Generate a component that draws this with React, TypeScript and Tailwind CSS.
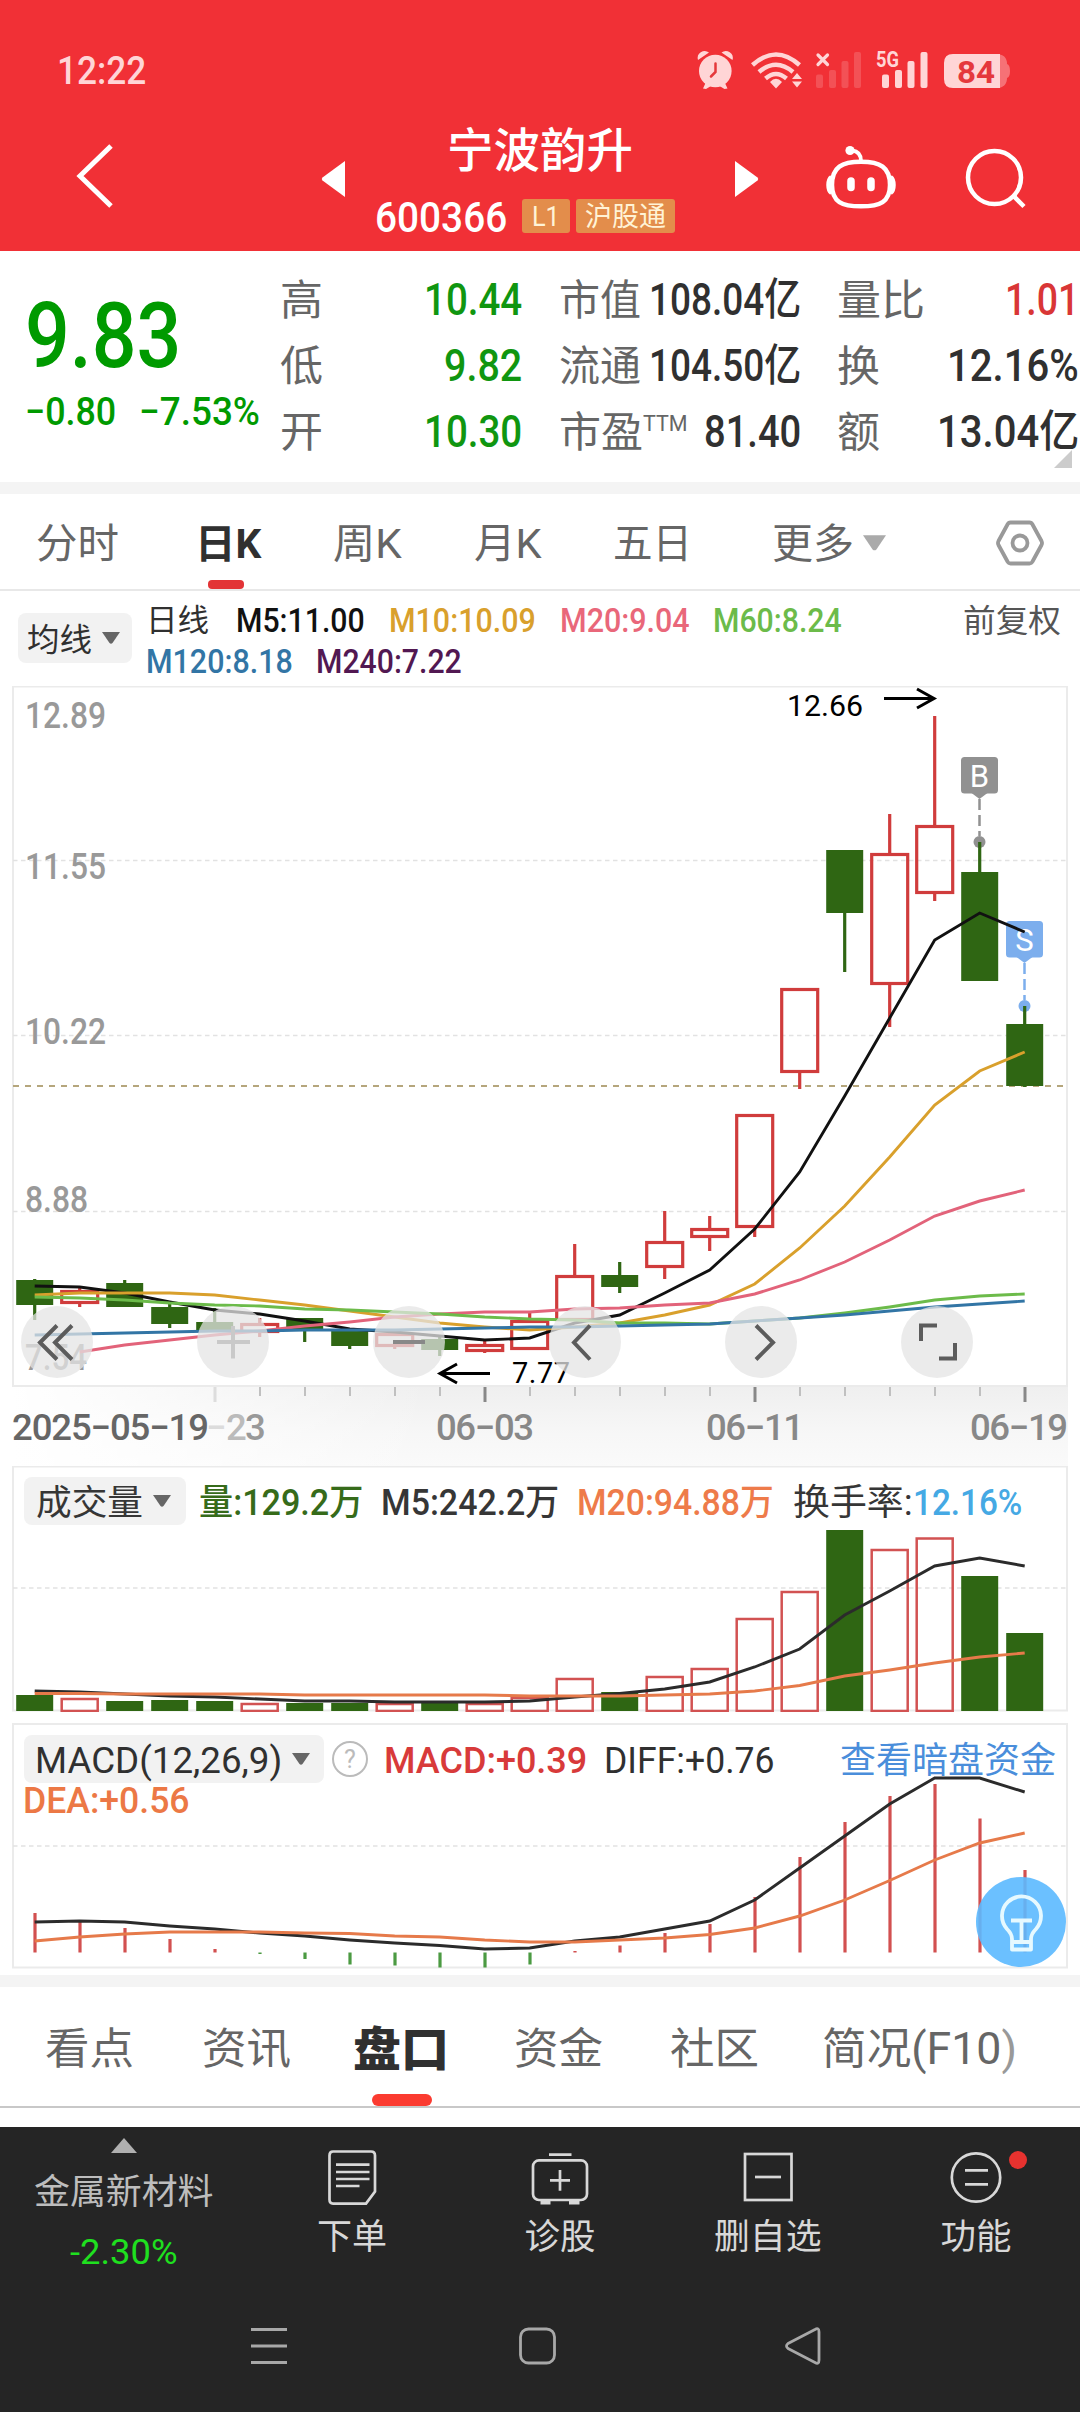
import { useLayoutEffect, useRef, useState, type ReactNode } from "react";

/** Single line of text squeezed horizontally to a fixed width, like a condensed DIN face. */
function Fit({ w, className = "", children }: { w: number; className?: string; children: ReactNode }) {
  const ref = useRef<HTMLSpanElement>(null);
  const [scale, setScale] = useState(1);
  useLayoutEffect(() => {
    if (ref.current) setScale(w / ref.current.offsetWidth);
  }, [w]);
  return (
    <span className={`inline-block shrink-0 translate-y-[2px] leading-none ${className}`} style={{ width: w }}>
      <span ref={ref} className="inline-block origin-left whitespace-nowrap" style={{ transform: `scaleX(${scale})` }}>{children}</span>
    </span>
  );
}

const GREEN = "#2f6613";
const RED = "#d03c3c";
const STEP = 45;
const cx = (i: number) => 34.7 + STEP * i;

// [up, high, body top, body bottom, low] in page pixels
const candles: [boolean, number, number, number, number][] = [
  [false, 1279, 1280, 1305, 1320],
  [true, 1288, 1290, 1304, 1307],
  [false, 1280, 1283, 1307, 1307],
  [false, 1304, 1307, 1324, 1328],
  [false, 1308, 1322, 1332, 1332],
  [true, 1318, 1323, 1333, 1337],
  [false, 1318, 1318, 1330, 1342],
  [false, 1331, 1331, 1346, 1349],
  [true, 1333, 1333, 1347, 1349],
  [false, 1337, 1339, 1350, 1356],
  [true, 1341, 1344, 1352, 1353],
  [true, 1313, 1320, 1350, 1350],
  [true, 1244, 1275, 1321, 1321],
  [false, 1262, 1275, 1287, 1293],
  [true, 1211, 1241, 1268, 1279],
  [true, 1216, 1228, 1238, 1251],
  [true, 1114, 1114, 1228, 1237],
  [true, 988, 988, 1073, 1089],
  [false, 850, 850, 913, 972],
  [true, 814, 853, 985, 1027],
  [true, 716, 825, 894, 901],
  [false, 842, 872, 981, 981],
  [false, 1006, 1024, 1086, 1087],
];

const ma5 = [1286, 1287, 1293, 1302, 1310, 1314, 1321, 1329, 1332, 1336, 1340, 1338, 1323, 1315, 1293, 1270, 1229, 1172, 1096, 1018, 940, 913, 932];
const ma10 = [1295, 1293, 1293, 1293, 1295, 1300, 1305, 1311, 1317, 1323, 1327, 1330, 1327, 1323, 1315, 1305, 1284, 1248, 1206, 1157, 1105, 1071, 1052];
const ma20 = [1352, 1345, 1340, 1335, 1331, 1326, 1322, 1317, 1314, 1312, 1312, 1309, 1308, 1305, 1303, 1294, 1280, 1262, 1240, 1216, 1201, 1190];
const ma60 = [1297, 1298, 1300, 1303, 1305, 1306, 1309, 1310, 1312, 1314, 1317, 1319, 1320, 1323, 1323, 1324, 1321, 1318, 1313, 1307, 1300, 1296, 1294];
const ma120 = [1335, 1334, 1333, 1332, 1331, 1331, 1330, 1330, 1330, 1329, 1328, 1327, 1327, 1326, 1325, 1324, 1321, 1318, 1315, 1311, 1307, 1304, 1301];

const volTop = [1695, 1698, 1701, 1700, 1701, 1703, 1703, 1703, 1703, 1703, 1703, 1697, 1678, 1692, 1676, 1668, 1618, 1591, 1530, 1549, 1537.5, 1576, 1633];
const vol5 = [1691, 1692, 1694, 1696, 1697, 1699, 1701, 1701, 1702, 1702, 1702, 1701, 1697, 1693.5, 1689, 1682, 1667, 1649, 1615, 1591, 1566, 1558, 1566];
const vol20 = [1693.5, 1693.5, 1694, 1694, 1694, 1694, 1695, 1695, 1695, 1695, 1695, 1696, 1696, 1696, 1695, 1694, 1691, 1685.5, 1676, 1670, 1663, 1657, 1653];

const macdEnd = [1913, 1920, 1928, 1939, 1949, 1954, 1959, 1964.5, 1965.5, 1967.5, 1967.5, 1964.5, 1951, 1945.5, 1933, 1924, 1897, 1857, 1822, 1796, 1784, 1818.5, 1870];
const diff = [1922, 1921, 1922, 1926, 1929, 1933, 1936, 1940, 1943, 1945.5, 1949, 1948, 1941, 1937, 1929, 1921, 1900, 1868, 1836, 1804, 1778, 1778, 1792];
const dea = [1941, 1937, 1934, 1932, 1932, 1932, 1933, 1933.5, 1936, 1937, 1940, 1942, 1942, 1940, 1938, 1934.5, 1928, 1916, 1900, 1880.5, 1860, 1843, 1833];

function Line({ data, color, from = 0 }: { data: number[]; color: string; from?: number }) {
  return <polyline points={data.map((y, i) => `${cx(i + from)},${y}`).join(" ")} fill="none" stroke={color} strokeWidth="2.9" />;
}

function Grid({ y }: { y: number }) {
  return <line x1="13" x2="1066" y1={y} y2={y} stroke="#e2e2e2" strokeWidth="1.5" strokeDasharray="4.5 3.5" />;
}

function Down({ className = "" }: { className?: string }) {
  return (
    <svg viewBox="0 0 18 12" className={className}>
      <path d="M0 0H18L10.5 11Q9 12.5 7.5 11Z" fill="currentColor" />
    </svg>
  );
}

function StatusBar() {
  return (
    <div className="flex h-[104px] items-center pl-[57px] pr-[65px] pt-[34px] text-[#ffd5d6]">
      <Fit w={89} className="translate-y-0 text-[38px] font-medium">12:22</Fit>
      <svg viewBox="690 44 325 50" className="ml-auto h-[50px] w-[325px]" fill="currentColor">
        <circle cx="715.3" cy="71" r="16.3" />
        <path d="M698 60A7 7 0 0 1 709 52.5ZM732.5 60A7 7 0 0 0 721.5 52.5ZM703 88.5L706 82L711 86L706 89ZM727.5 88.5L724.5 82L719.5 86L724.5 89Z" />
        <path d="M715.5 63.5V72L711 76.5" fill="none" stroke="#e5383c" strokeWidth="2.5" strokeLinecap="round" />
        <g fill="none" stroke="currentColor" strokeWidth="4.5">
          <path d="M752.5 65Q776 44 799.5 65" />
          <path d="M759 72Q776 57.5 793 72" />
          <path d="M765.5 78.5Q776 69.5 786.5 78.5" />
        </g>
        <path d="M770 82Q776 75.5 782 82L776 88.5ZM792 79L797 73L802 79ZM792 81.5L797 87.5L802 81.5Z" />
        <g opacity=".2">
          <rect x="816" y="74.5" width="7" height="13.5" rx="2" />
          <rect x="829" y="70" width="7" height="18" rx="2" />
          <rect x="841.5" y="61" width="7" height="27" rx="2" />
          <rect x="854" y="52" width="7" height="36" rx="2" />
        </g>
        <path d="M818 55L827.5 64.5M827.5 55L818 64.5" stroke="currentColor" strokeWidth="3.2" strokeLinecap="round" />
        <text x="876" y="66.5" fontSize="21.5" fontWeight="700" textLength="23" lengthAdjust="spacingAndGlyphs">5G</text>
        <rect x="882" y="74.5" width="7" height="13.5" rx="2" />
        <rect x="895" y="70" width="7" height="18" rx="2" />
        <rect x="907.5" y="61" width="7" height="27" rx="2" />
        <rect x="920.5" y="52" width="7" height="36" rx="2" />
        <path d="M996 54Q1007 54 1007 64Q1010 65 1010 71Q1010 77 1007 78Q1007 88 996 88Z" opacity=".4" />
        <path d="M953 54H1000V88H953Q944 88 944 79V63Q944 54 953 54Z" />
        <text x="957" y="82.5" fontSize="32" fontWeight="700" fill="#e5383c" textLength="38" lengthAdjust="spacingAndGlyphs">84</text>
      </svg>
    </div>
  );
}

function TitleBar() {
  return (
    <div className="flex h-[147px] items-start text-white">
      <svg viewBox="70 135 50 84" className="ml-[70px] mt-[31px] h-[84px] w-[50px]" fill="none" stroke="currentColor" strokeWidth="5">
        <path d="M111 146L80 176L111 206" />
      </svg>
      <svg viewBox="0 0 24 36" className="ml-[201px] mt-[57px] h-9 w-6" fill="currentColor"><path d="M24 0V36L1.5 19.5Q0 18 1.5 16.5Z" /></svg>
      <div className="ml-[30px] mr-[60px] flex w-[300px] flex-col">
        <Fit w={186} className="ml-[72px] mt-[21px] text-[47px] font-medium">宁波韵升</Fit>
        <div className="mt-[24px] flex h-[40px] items-center">
          <Fit w={132} className="-translate-y-px text-[42px] font-medium">600366</Fit>
          <span className="ml-[15px] flex h-[34px] w-[48px] items-center justify-center rounded-[3px] bg-[#e38d4b] text-[#fff3d6]"><Fit w={28} className="translate-y-px text-[28px]">L1</Fit></span>
          <span className="ml-[6px] flex h-[34px] w-[99px] items-center justify-center rounded-[3px] bg-[#e38d4b] text-[#fff3d6]"><Fit w={81} className="translate-y-px text-[27px]">沪股通</Fit></span>
        </div>
      </div>
      <svg viewBox="0 0 24 36" className="mt-[57px] h-9 w-6" fill="currentColor"><path d="M0 0V36L22.5 19.5Q24 18 22.5 16.5Z" /></svg>
      <svg viewBox="820 140 215 75" className="ml-[61px] mt-[36px] h-[75px] w-[215px]" fill="none" stroke="currentColor" strokeWidth="4.5">
        <path d="M861 161.8C880 161.8 890 167 890 185C890 202 880 206.3 861 206.3S832 202 832 185C832 167 842 161.8 861 161.8Z" />
        <path d="M831.5 177Q828.5 179 828.5 185Q828.5 191 831.5 193M890.5 177Q893.5 179 893.5 185Q893.5 191 890.5 193" />
        <path d="M861 161Q861 151.5 852 150.5" strokeWidth="3.8" />
        <circle cx="850" cy="150.5" r="4.6" fill="currentColor" stroke="none" />
        <path d="M851 181V187.5M871 181V187.5" strokeWidth="7.5" strokeLinecap="round" />
        <circle cx="994.5" cy="177.5" r="26.5" />
        <path d="M1013.5 196L1024 206.5" />
      </svg>
    </div>
  );
}

function Stat({ label, lw, sup, value, vw, color = "text-[#303030]" }: { label: string; lw: number; sup?: string; value: string; vw: number; color?: string }) {
  return (
    <div className="flex h-[66px] items-center justify-between">
      <div className="flex items-center text-[#666]">
        <Fit w={lw} className="text-[42px]">{label}</Fit>
        {sup && <Fit w={45} className="mb-[18px] text-[22px]">{sup}</Fit>}
      </div>
      <Fit w={vw} className={`translate-y-px text-[44px] font-medium ${color}`}>{value}</Fit>
    </div>
  );
}

function Quote() {
  return (
    <section className="relative flex h-[231px] pt-[15px]">
      <div className="flex w-[280px] flex-col pl-[25px] text-[#009a00]">
        <Fit w={156} className="mt-[23px] text-[91px] font-medium">9.83</Fit>
        <div className="mt-[11px] flex">
          <Fit w={91} className="text-[39px] font-medium">−0.80</Fit>
          <Fit w={121} className="ml-[23px] text-[39px] font-medium">−7.53%</Fit>
        </div>
      </div>
      <div className="w-[242px]">
        <Stat label="高" lw={43} value="10.44" vw={98} color="text-[#109610]" />
        <Stat label="低" lw={43} value="9.82" vw={78} color="text-[#109610]" />
        <Stat label="开" lw={43} value="10.30" vw={98} color="text-[#109610]" />
      </div>
      <div className="ml-[37px] w-[242px]">
        <Stat label="市值" lw={82} value="108.04亿" vw={152} />
        <Stat label="流通" lw={82} value="104.50亿" vw={152} />
        <Stat label="市盈" lw={84} sup="TTM" value="81.40" vw={97} />
      </div>
      <div className="ml-[36px] w-[242px]">
        <Stat label="量比" lw={88} value="1.01" vw={74} color="text-[#d93636]" />
        <Stat label="换" lw={43} value="12.16%" vw={132} />
        <Stat label="额" lw={43} value="13.04亿" vw={142} />
      </div>
      <svg viewBox="0 0 18 18" className="absolute bottom-[14px] right-[8px] h-[18px] w-[18px]"><path d="M18 0V18H0Z" fill="#ccc" /></svg>
    </section>
  );
}

function PeriodTabs() {
  return (
    <nav className="flex h-[97px] items-center border-b-2 border-[#e8e8e8] pt-[2px] text-[41px] text-[#666]">
      <Fit w={83} className="ml-[36px]">分时</Fit>
      <div className="relative ml-[76px] flex h-full items-center text-[#303030]">
        <Fit w={66} className="text-[40px] font-bold">日K</Fit>
        <span className="absolute bottom-0 left-[13px] h-[9px] w-[36px] rounded-[4px] bg-[#e33436]" />
      </div>
      <Fit w={69} className="ml-[72px]">周K</Fit>
      <Fit w={68} className="ml-[72px]">月K</Fit>
      <Fit w={79} className="ml-[71px]">五日</Fit>
      <Fit w={82} className="ml-[80px]">更多</Fit>
      <Down className="ml-[9px] h-[18px] w-[23px] text-[#aaa]" />
      <svg viewBox="0 0 48 46" className="ml-[110px] h-[46px] w-[48px]" fill="none" stroke="#999" strokeWidth="3.8">
        <path d="M14.5 2.5H33.5Q35.5 2.5 36.5 4.5L45.5 21Q46.5 23 45.5 25L36.5 41.5Q35.5 43.5 33.5 43.5H14.5Q12.5 43.5 11.5 41.5L2.5 25Q1.5 23 2.5 21L11.5 4.5Q12.5 2.5 14.5 2.5Z" />
        <circle cx="24" cy="23" r="7.5" />
      </svg>
    </nav>
  );
}

function AverageLegend() {
  return (
    <div className="flex h-[95px] items-start pl-[18px] text-[33.5px]">
      <div className="mt-[22px] flex h-[50px] w-[114px] items-center rounded-lg bg-[#f2f2f2] pl-[9px] text-[#303030]">
        <Fit w={65} className="text-[32px]">均线</Fit>
        <Down className="ml-[10px] h-[12px] w-[18px] text-[#666]" />
      </div>
      <div className="ml-[14px] mt-[7px] w-[740px] font-medium">
        <div className="flex h-[41px] items-center gap-[24px]">
          <Fit w={63} className="mr-[3px] text-[31px] font-normal text-[#303030]">日线</Fit>
          <Fit w={129} className="text-[#111]">M5:11.00</Fit>
          <Fit w={147} className="text-[#d9a02c]">M10:10.09</Fit>
          <Fit w={130} className="text-[#e9677a]">M20:9.04</Fit>
          <Fit w={129} className="-ml-px text-[#6cbb4a]">M60:8.24</Fit>
        </div>
        <div className="flex h-[41px] items-center gap-[23px]">
          <Fit w={147} className="text-[#3275a5]">M120:8.18</Fit>
          <Fit w={146} className="text-[#521852]">M240:7.22</Fit>
        </div>
      </div>
      <Fit w={98} className="ml-[77px] mt-[12px] text-[32px] text-[#555]">前复权</Fit>
    </div>
  );
}

/** Letter flag hanging over a trade point. */
function Flag({ x, y, dot, color, letter }: { x: number; y: number; dot: number; color: string; letter: string }) {
  return (
    <g fill={color}>
      <rect x={x - 18.5} y={y} width="37" height="36.5" rx="3.5" />
      <path d={`M${x - 8} ${y + 36}H${x + 8}L${x} ${y + 42}Z`} />
      <line x1={x} x2={x} y1={y + 42} y2={dot - 6} stroke={color} strokeWidth="2.5" strokeDasharray="11 5" />
      <circle cx={x} cy={dot} r="6" />
      <text x={x} y={y + 29.5} fontSize="31" textAnchor="middle" fill="#fff">{letter}</text>
    </g>
  );
}

const prices: [string, number, number][] = [["12.89", 728, 81], ["11.55", 879, 81], ["10.22", 1044, 81], ["8.88", 1212, 63], ["7.54", 1370, 62]];

const controls = [
  { d: "M36 19.5L19 36.5L36 53.5M51 19.5L34 36.5L51 53.5", color: "#5c5c5c" },
  { d: "M20 36H53M36 20V52.5", color: "#c9c9c9" },
  { d: "M20 36H52", color: "#888" },
  { d: "M41 19.5L25 36.5L41 53.5", color: "#5c5c5c" },
  { d: "M31 19.5L48 36.5L31 53.5", color: "#5c5c5c" },
  { d: "M36 19.5H20V35M54 37V52.5H38", color: "#5c5c5c" },
];

function CandleChart() {
  return (
    <div className="relative h-[780px]">
      <svg viewBox="0 686 1080 780" className="block h-[780px] w-full">
        <defs>
          <linearGradient id="axis" x2="0" y2="1">
            <stop stopColor="#efefef" />
            <stop offset=".6" stopColor="#f7f7f7" />
            <stop offset="1" stopColor="#fafafa" />
          </linearGradient>
          <linearGradient id="fade">
            <stop stopColor="#fff" />
            <stop offset=".2" stopColor="#fff" stopOpacity=".8" />
            <stop offset="1" stopColor="#fff" stopOpacity="0" />
          </linearGradient>
        </defs>
        <rect x="12" y="1387" width="1056" height="79" fill="url(#axis)" />
        <rect x="12" y="1387" width="420" height="79" fill="url(#fade)" />
        <rect x="13" y="686.5" width="1054" height="699.5" fill="none" stroke="#ebebeb" strokeWidth="2" />
        <Grid y={860.5} />
        <Grid y={1035.5} />
        <Grid y={1211.5} />
        <line x1="13" x2="1066" y1="1086" y2="1086" stroke="#b5a67c" strokeWidth="2" strokeDasharray="6 6" />
        {prices.map(([t, y, w]) => (
          <text key={t} x="25" y={y} fontSize="36" fontWeight="500" fill="#999" textLength={w} lengthAdjust="spacingAndGlyphs">{t}</text>
        ))}
        <Flag x={979.5} y={757} dot={842} color="#919191" letter="B" />
        <Flag x={1024.5} y={921} dot={1006} color="#7caeed" letter="S" />
        {candles.map(([up, hi, top, bot, lo], i) => (
          <g key={i}>
            <path d={`M${cx(i)} ${hi}V${top}M${cx(i)} ${bot}V${lo}`} stroke={up ? RED : GREEN} strokeWidth="3.2" />
            {up ? (
              <rect x={cx(i) - 18} y={top + 1.5} width="36" height={bot - top - 3} fill="none" stroke={RED} strokeWidth="3.2" />
            ) : (
              <rect x={cx(i) - 18.5} y={top} width="37" height={bot - top} fill={GREEN} />
            )}
          </g>
        ))}
        <Line data={ma5} color="#111" />
        <Line data={ma10} color="#d9a02c" />
        <Line data={ma20} color="#e2637a" from={1} />
        <Line data={ma60} color="#6cbb4a" />
        <Line data={ma120} color="#3275a5" />
        <g fill="none" stroke="#000" strokeWidth="3">
          <path d="M884 698.5H934M917 689L934 698.5L917 708" />
          <path d="M490 1373.5H440M457 1364L440 1373.5L457 1383" />
        </g>
        <text x="787" y="716" fontSize="30" textLength="76" lengthAdjust="spacingAndGlyphs">12.66</text>
        <text x="512" y="1382.5" fontSize="29" textLength="58" lengthAdjust="spacing">7.77</text>
        {candles.map((_, i) => i > 3 && (
          <path key={i} d={`M${cx(i) + 0.3} 1387V${(i - 4) % 6 ? 1396 : 1402}`} stroke={i === 4 ? "#ddd" : (i - 4) % 6 ? "#c0c0c0" : "#888"} strokeWidth={(i - 4) % 6 ? 2 : 3} />
        ))}
        <g fontSize="36.5" fontWeight="500" fill="#888">
          <text x="12" y="1440" fill="#666" textLength="197" lengthAdjust="spacing">2025−05−19</text>
          <text x="206" y="1440" fill="#dcdcdc">−</text>
          <text x="226" y="1440" fill="#bbb">2</text>
          <text x="245" y="1440" fill="#999">3</text>
          <text x="436" y="1440" textLength="98" lengthAdjust="spacing">06−03</text>
          <text x="706" y="1440" textLength="98" lengthAdjust="spacing">06−11</text>
          <text x="970" y="1440" textLength="98" lengthAdjust="spacing">06−19</text>
        </g>
      </svg>
      <div className="absolute left-[21px] top-[620px] flex gap-[104px]">
        {controls.map((c) => (
          <span key={c.d} className="h-[72px] w-[72px] rounded-full bg-[#e4e4e4]/75">
            <svg viewBox="0 0 72 72" fill="none" stroke={c.color} strokeWidth="4"><path d={c.d} /></svg>
          </span>
        ))}
      </div>
    </div>
  );
}

function VolumeChart() {
  return (
    <div className="relative h-[246px]">
      <svg viewBox="0 1466 1080 246" className="absolute inset-0 h-[246px] w-full">
        <rect x="13" y="1466.5" width="1054" height="244" fill="none" stroke="#ebebeb" strokeWidth="2" />
        <Grid y={1588} />
        {volTop.map((y, i) => candles[i][0] ? (
          <rect key={i} x={cx(i) - 18} y={y + 1} width="36" height={1710 - y} fill="none" stroke="#d25252" strokeWidth="2.5" />
        ) : (
          <rect key={i} x={cx(i) - 18.5} y={y} width="37" height={1711 - y} fill={GREEN} />
        ))}
        <Line data={vol5} color="#2b2b2b" />
        <Line data={vol20} color="#e67a4a" />
      </svg>
      <div className="relative flex items-center pl-[24px] pt-[11px] text-[36px] font-medium text-[#363636]">
        <div className="flex h-[48px] w-[162px] items-center rounded-lg bg-[#f2f2f2] pl-[12px]">
          <Fit w={107} className="text-[35px] font-normal">成交量</Fit>
          <Down className="ml-[10px] h-[12px] w-[18px] text-[#666]" />
        </div>
        <Fit w={164} className="ml-[13px] text-[#366b1a]">量:129.2万</Fit>
        <Fit w={178} className="ml-[18px]">M5:242.2万</Fit>
        <Fit w={197} className="ml-[18px] text-[#ee7b4a]">M20:94.88万</Fit>
        <Fit w={120} className="ml-[19px] font-normal">换手率:</Fit>
        <Fit w={109} className="text-[#45a9e4]">12.16%</Fit>
      </div>
    </div>
  );
}

function MacdChart() {
  return (
    <div className="relative mt-[11px] h-[252px]">
      <svg viewBox="0 1723 1080 252" className="absolute inset-0 h-[252px] w-full">
        <rect x="13" y="1724" width="1054" height="243.5" fill="none" stroke="#ebebeb" strokeWidth="2" />
        <Grid y={1846} />
        {macdEnd.map((y, i) => (
          <line key={i} x1={cx(i) + 0.3} x2={cx(i) + 0.3} y1="1952.5" y2={y} stroke={y > 1952.5 ? "#4b9a42" : "#d25050"} strokeWidth="3.2" />
        ))}
        <Line data={diff} color="#2b2b2b" />
        <Line data={dea} color="#e67a4a" />
      </svg>
      <div className="relative flex items-center pl-[24px] pt-[12px] text-[36px] text-[#303030]">
        <div className="flex h-[48px] w-[300px] items-center rounded-lg bg-[#f2f2f2] pl-[11px]">
          <Fit w={247}>MACD(12,26,9)</Fit>
          <Down className="ml-[10px] h-[12px] w-[18px] text-[#666]" />
        </div>
        <span className="ml-[8px] flex h-[36px] w-[36px] items-center justify-center rounded-full border-[2.5px] border-[#bbb] text-[25px] leading-none text-[#bbb]">?</span>
        <Fit w={203} className="ml-[16px] font-medium text-[#d83a3a]">MACD:+0.39</Fit>
        <Fit w={171} className="ml-[17px]">DIFF:+0.76</Fit>
        <Fit w={216} className="ml-[65px] text-[#4a8edb]">查看暗盘资金</Fit>
      </div>
      <Fit w={167} className="relative ml-[23px] mt-[-2px] block text-[36px] font-medium text-[#ec7845]">DEA:+0.56</Fit>
      <span className="absolute left-[976px] top-[154px] h-[90px] w-[90px] rounded-full bg-[#5bb9ff]/90">
        <svg viewBox="976 1877 90 90" fill="none" stroke="#e6f9ff" strokeWidth="3.8" strokeLinejoin="round">
          <path d="M1012 1949.5V1939Q1012 1934 1007 1929A19.5 19.5 0 1 1 1036 1929Q1031 1934 1031 1939V1949.5Z" />
          <path d="M1011 1920.5H1032M1021.5 1921V1940M1012 1942H1031" />
        </svg>
      </span>
    </div>
  );
}

function InfoTabs() {
  return (
    <nav className="flex h-[121px] items-center border-b-2 border-[#c8c8c8] pl-[45px] pt-[2px] text-[43.5px] text-[#666]">
      <Fit w={89}>看点</Fit>
      <Fit w={89} className="ml-[68px]">资讯</Fit>
      <div className="relative ml-[62px] flex h-full items-center text-[#303030]">
        <Fit w={96} className="text-[47px] font-black">盘口</Fit>
        <span className="absolute bottom-0 left-[19px] h-[12px] w-[60px] rounded-[6px] bg-[#fb3b30]" />
      </div>
      <Fit w={89} className="ml-[65px]">资金</Fit>
      <Fit w={89} className="ml-[67px]">社区</Fit>
      <Fit w={195} className="ml-[63px]">简况(F10<span className="text-[#999]">)</span></Fit>
    </nav>
  );
}

const actions: { label: string; w: number; icon: ReactNode }[] = [
  {
    label: "下单", w: 70,
    icon: <path d="M11 4.5H49Q53 4.5 53 8.5V44.5L44 56.6H11Q7.5 56.6 7.5 52.5V8.5Q7.5 4.5 11 4.5ZM14 17.7H47.5M14 25H47.5M14 32H47.5M14 39H37.5" />,
  },
  {
    label: "诊股", w: 71,
    icon: <><rect x="3" y="13.4" width="54" height="39.6" rx="6" /><path d="M19 7.7H41.5M30 23V43.7M20 33.3H40" /><path d="M10.5 55.5H20.5M39 55.5H49.5" strokeWidth="4" /></>,
  },
  {
    label: "删自选", w: 108,
    icon: <><rect x="7" y="7" width="46.5" height="46" /><path d="M17 30H43" /></>,
  },
  {
    label: "功能", w: 71,
    icon: <><circle cx="30" cy="30.5" r="24.2" /><path d="M19 23.3H42M19 37.3H42" /><circle cx="72" cy="13" r="9" fill="#e7322f" stroke="none" /></>,
  },
];

function BottomBar() {
  return (
    <footer className="h-[285px] bg-[#252525]">
      <div className="flex h-[170px]">
        <div className="flex w-[248px] flex-col items-center pt-[11px]">
          <svg viewBox="0 0 26 15" className="h-[15px] w-[26px]"><path d="M13 0L26 15H0Z" fill="#b0b0b0" /></svg>
          <Fit w={180} className="mt-[20px] text-[35.5px] text-[#bdbdbd]">金属新材料</Fit>
          <Fit w={108} className="mt-[24px] text-[35px] text-[#1fe01f]">-2.30%</Fit>
        </div>
        {actions.map((a) => (
          <div key={a.label} className="flex w-[208px] flex-col items-center pt-[20px] text-[#d8d8d8]">
            <svg viewBox="0 0 60 60" className="h-[60px] w-[60px] overflow-visible" fill="none" stroke="currentColor" strokeWidth="2.7">{a.icon}</svg>
            <Fit w={a.w} className="mt-[11px] text-[35.5px]">{a.label}</Fit>
          </div>
        ))}
      </div>
      <svg viewBox="0 2297 1080 100" className="block h-[100px] w-full" fill="none" stroke="#a8a8a8" strokeWidth="2.8" strokeLinejoin="round">
        <path d="M251 2329.5H287M251 2346H287M251 2362.5H287" />
        <rect x="520.5" y="2329" width="34" height="34" rx="8" />
        <path d="M815 2329.5Q819 2327 819 2332V2360Q819 2365 815 2362.5L788 2348.5Q785 2346 788 2343.5Z" />
      </svg>
    </footer>
  );
}

export default function App() {
  return (
    <main className="w-[1080px] overflow-hidden bg-white font-['Roboto','Noto_Sans_CJK_SC',sans-serif]">
      <header className="h-[251px] bg-[#f13036]">
        <StatusBar />
        <TitleBar />
      </header>
      <Quote />
      <div className="h-[12px] bg-[#f4f4f4]" />
      <PeriodTabs />
      <AverageLegend />
      <CandleChart />
      <VolumeChart />
      <MacdChart />
      <div className="h-[12px] bg-[#f4f4f4]" />
      <InfoTabs />
      <div className="h-[19px]" />
      <BottomBar />
    </main>
  );
}
